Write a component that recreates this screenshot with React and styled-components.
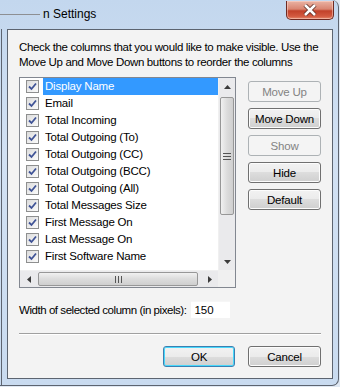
import React from 'react';
import styled, { createGlobalStyle } from 'styled-components';

const GlobalStyle = createGlobalStyle`
  html, body {
    margin: 0;
    padding: 0;
    width: 340px;
    height: 387px;
    overflow: hidden;
    background: #dfe8f3;
  }
  * {
    box-sizing: border-box;
  }
  body {
    font-family: "Liberation Sans", Arial, sans-serif;
    font-size: 11.5px;
    color: #000;
  }
`;

const Window = styled.div`
  width: 339px;
  height: 386px;
  display: flex;
  flex-direction: column;
  background: linear-gradient(180deg, #c3d7ee 0%, #d2e1f3 40%, #c9dbf0 100%);
  border-right: 1px solid #5d6470;
  border-bottom: 1px solid #5d6470;
  border-bottom-right-radius: 7px;
  border-top-right-radius: 7px;
`;

const TitleBar = styled.div`
  height: 29px;
  flex: none;
  display: flex;
  align-items: flex-start;
  position: relative;
`;

const TitleLine = styled.div`
  width: 40px;
  height: 1px;
  margin-top: 14px;
  background: #8d8f93;
`;

const Title = styled.div`
  margin: 7px 0 0 3px;
  font-size: 12px;
  line-height: 15px;
  color: #000;
`;

const CloseButton = styled.div`
  position: absolute;
  top: 1px;
  right: 4px;
  width: 48px;
  height: 19px;
  border: 1px solid #6e2a22;
  border-top: none;
  border-radius: 0 0 5px 5px;
  background: linear-gradient(180deg, #eab3a4 0%, #d98571 45%, #c2412a 55%, #d35a40 85%, #e58a6e 100%);
  box-shadow: inset 0 0 0 1px rgba(255, 220, 210, 0.5);
  display: flex;
  align-items: center;
  justify-content: center;
`;

const Body = styled.div`
  flex: 1;
  display: flex;
  border-left: 1px solid #5d6470;
  margin-left: 1px;
  padding: 0 5px 6px 5px;
`;

const Client = styled.div`
  flex: 1;
  display: flex;
  flex-direction: column;
  background: #f3f3f3;
  border: 1px solid #5c6470;
  padding: 10px 11px 0 11px;
`;

const Intro = styled.p`
  margin: 0;
  line-height: 15px;
  letter-spacing: -0.35px;
`;

const Main = styled.div`
  display: flex;
  gap: 12px;
  margin-top: 7px;
`;

const ListBox = styled.div`
  width: 217px;
  height: 211px;
  border: 1px solid #828790;
  background: #fff;
  display: grid;
  grid-template-columns: 1fr 17px;
  grid-template-rows: 1fr 17px;
`;

const Rows = styled.div`
  overflow: hidden;
  padding-left: 2px;
`;

const Row = styled.div`
  height: 17px;
  display: flex;
  align-items: center;
  gap: 4px;
`;

const Check = styled.span`
  width: 13px;
  height: 13px;
  flex: none;
  margin-left: 4px;
  border: 1px solid #8e8f8f;
  background: linear-gradient(135deg, #dcdcdc 0%, #fbfbfb 100%);
  display: flex;
  align-items: center;
  justify-content: center;
`;

const Label = styled.span`
  flex: 1;
  height: 17px;
  line-height: 17px;
  padding-left: 2px;
  letter-spacing: -0.2px;
  white-space: nowrap;
  background: ${(p) => (p.$selected ? '#3399ff' : 'transparent')};
  color: ${(p) => (p.$selected ? '#fff' : '#000')};
`;

const VScroll = styled.div`
  display: flex;
  flex-direction: column;
  background: #eaeaec;
  border-left: 1px solid #f0f0f0;
`;

const ArrowBox = styled.div`
  height: 17px;
  flex: none;
  display: flex;
  align-items: center;
  justify-content: center;
`;

const VTrack = styled.div`
  flex: 1;
  display: flex;
  flex-direction: column;
  padding: 2px 1px 0 1px;
`;

const VThumb = styled.div`
  height: 118px;
  border: 1px solid #979797;
  border-radius: 2px;
  background: linear-gradient(90deg, #f1f1f1 0%, #dcdcdc 50%, #cfcfcf 100%);
  display: flex;
  align-items: center;
  justify-content: center;
`;

const HScroll = styled.div`
  display: flex;
  background: #eaeaec;
  border-top: 1px solid #f0f0f0;
`;

const HArrowBox = styled.div`
  width: 17px;
  flex: none;
  display: flex;
  align-items: center;
  justify-content: center;
`;

const HTrack = styled.div`
  flex: 1;
  display: flex;
  align-items: stretch;
  padding: 1px 0;
`;

const HThumb = styled.div`
  width: 160px;
  margin-left: 1px;
  border: 1px solid #979797;
  border-radius: 2px;
  background: linear-gradient(180deg, #f1f1f1 0%, #dcdcdc 50%, #cfcfcf 100%);
  display: flex;
  align-items: center;
  justify-content: center;
`;

const Corner = styled.div`
  background: #f0f0f0;
`;

const ButtonColumn = styled.div`
  display: flex;
  flex-direction: column;
  gap: 6px;
  padding-top: 4px;
`;

const Button = styled.button`
  width: ${(p) => p.$width || 73}px;
  height: 21px;
  padding: 0;
  font-family: "Liberation Sans", Arial, sans-serif;
  font-size: 11.5px;
  letter-spacing: -0.2px;
  border-radius: 3px;
  border: 1px solid ${(p) => (p.disabled ? '#adb2b5' : p.$default ? '#3c7fb1' : '#707070')};
  color: ${(p) => (p.disabled ? '#838383' : '#000')};
  background: ${(p) =>
    p.disabled
      ? '#f4f4f4'
      : 'linear-gradient(180deg, #f2f2f2 0%, #ebebeb 50%, #dddddd 50%, #cfcfcf 100%)'};
  box-shadow: ${(p) =>
    p.disabled ? 'none' : p.$default ? 'inset 0 0 0 1px #48d8fb' : 'inset 0 0 0 1px #fcfcfc'};
`;

const WidthRow = styled.div`
  display: flex;
  align-items: center;
  gap: 5px;
  margin-top: 13px;
`;

const WidthLabel = styled.span`
  letter-spacing: -0.45px;
`;

const WidthInput = styled.div`
  width: 39px;
  height: 17px;
  background: #fff;
  border-top: 1px solid #f6f6f6;
  padding-left: 3px;
  line-height: 16px;
`;

const Separator = styled.div`
  height: 2px;
  margin-top: 15px;
  border-top: 1px solid #a0a0a0;
  border-bottom: 1px solid #fff;
`;

const Footer = styled.div`
  display: flex;
  justify-content: flex-end;
  gap: 13px;
  margin-top: 11px;
`;

const CheckMark = () => (
  <svg width="9" height="9" viewBox="0 0 9 9">
    <path d="M1 4.5 L3.5 7 L8 1.5" fill="none" stroke="#3f5396" strokeWidth="1.8" />
  </svg>
);

const Arrow = ({ dir }) => {
  const pts = {
    up: '0,4 3.5,0 7,4',
    down: '0,0 3.5,4 7,0',
    left: '4,0 0,3.5 4,7',
    right: '0,0 4,3.5 0,7',
  }[dir];
  const vertical = dir === 'up' || dir === 'down';
  return (
    <svg width={vertical ? 7 : 4} height={vertical ? 4 : 7}>
      <polygon points={pts} fill="#3b3b3b" />
    </svg>
  );
};

const Grip = ({ horizontal }) =>
  horizontal ? (
    <svg width="7" height="7">
      <path d="M0.5 0 V7 M3.5 0 V7 M6.5 0 V7" stroke="#555" strokeWidth="1" />
    </svg>
  ) : (
    <svg width="8" height="7">
      <path d="M0 0.5 H8 M0 3.5 H8 M0 6.5 H8" stroke="#555" strokeWidth="1" />
    </svg>
  );

const columns = [
  'Display Name',
  'Email',
  'Total Incoming',
  'Total Outgoing (To)',
  'Total Outgoing (CC)',
  'Total Outgoing (BCC)',
  'Total Outgoing (All)',
  'Total Messages Size',
  'First Message On',
  'Last Message On',
  'First Software Name',
];

export default function App() {
  return (
    <>
      <GlobalStyle />
      <Window>
        <TitleBar>
          <TitleLine />
          <Title>n Settings</Title>
          <CloseButton>
            <svg width="14" height="12" viewBox="0 0 14 12">
              <path d="M2 1 L12 11 M12 1 L2 11" stroke="#5a2a22" strokeWidth="4.2" />
              <path d="M2 1 L12 11 M12 1 L2 11" stroke="#fff" strokeWidth="2.6" />
            </svg>
          </CloseButton>
        </TitleBar>
        <Body>
          <Client>
            <Intro>
              Check the columns that you would like to make visible. Use the Move Up and Move Down
              buttons to reorder the columns
            </Intro>
            <Main>
              <ListBox>
                <Rows>
                  {columns.map((name, i) => (
                    <Row key={name}>
                      <Check>
                        <CheckMark />
                      </Check>
                      <Label $selected={i === 0}>{name}</Label>
                    </Row>
                  ))}
                </Rows>
                <VScroll>
                  <ArrowBox>
                    <Arrow dir="up" />
                  </ArrowBox>
                  <VTrack>
                    <VThumb>
                      <Grip />
                    </VThumb>
                  </VTrack>
                  <ArrowBox>
                    <Arrow dir="down" />
                  </ArrowBox>
                </VScroll>
                <HScroll>
                  <HArrowBox>
                    <Arrow dir="left" />
                  </HArrowBox>
                  <HTrack>
                    <HThumb>
                      <Grip horizontal />
                    </HThumb>
                  </HTrack>
                  <HArrowBox>
                    <Arrow dir="right" />
                  </HArrowBox>
                </HScroll>
                <Corner />
              </ListBox>
              <ButtonColumn>
                <Button disabled>Move Up</Button>
                <Button>Move Down</Button>
                <Button disabled>Show</Button>
                <Button>Hide</Button>
                <Button>Default</Button>
              </ButtonColumn>
            </Main>
            <WidthRow>
              <WidthLabel>Width of selected column (in pixels):</WidthLabel>
              <WidthInput>150</WidthInput>
            </WidthRow>
            <Separator />
            <Footer>
              <Button $default $width={72}>OK</Button>
              <Button>Cancel</Button>
            </Footer>
          </Client>
        </Body>
      </Window>
    </>
  );
}
